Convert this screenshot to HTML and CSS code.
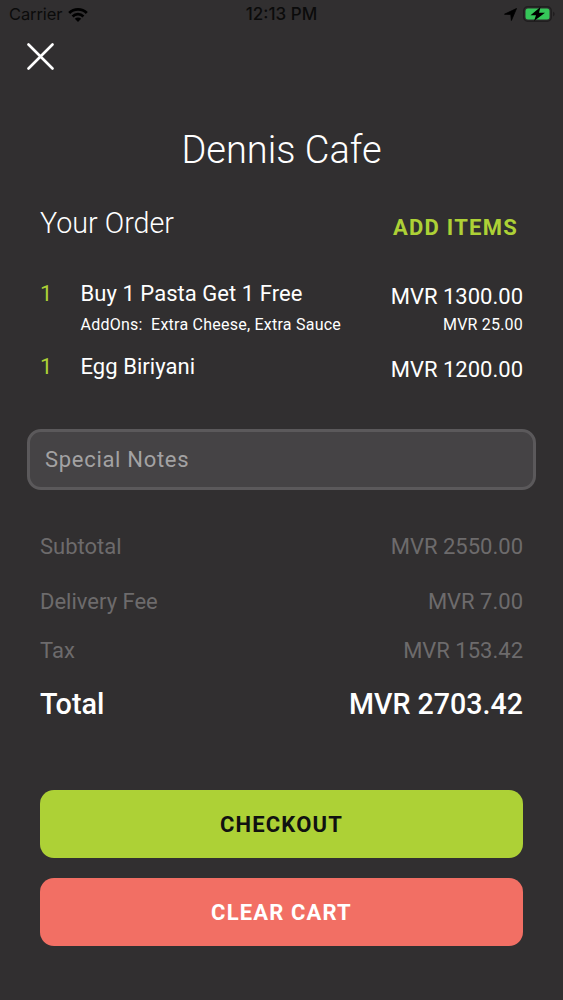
FILE: index.html
```html
<!DOCTYPE html>
<html lang="en">
<head>
<meta charset="utf-8">
<title>Dennis Cafe</title>
<link rel="stylesheet" href="styles.css">
</head>
<body>
<div class="screen">
  <header class="status">
    <div class="status-left"><span class="carrier">Carrier</span>
      <svg class="wifi" width="20" height="15" viewBox="0 0 20 15"><path d="M10 15 6.8 11.7a4.6 4.6 0 0 1 6.4 0zM3.6 8.500a9.1 9.1 0 0 1 12.8 0l-1.900 1.900a6.4 6.4 0 0 0-9 0zM.2 5a13.9 13.9 0 0 1 19.6 0l-2 2a11.1 11.1 0 0 0-15.6 0z"/></svg>
    </div>
    <span class="time">12:13 PM</span>
    <div class="status-right">
      <svg width="13" height="13" viewBox="0 0 13 13"><path d="M12.500.500 7.400 12.500 6.800 6.500.500 6.200z" stroke="#000" stroke-width=".8" stroke-linejoin="round"/></svg>
      <svg width="33" height="16" viewBox="0 0 33 16"><rect x=".75" y=".75" width="27.500" height="14.500" rx="4" fill="none" stroke="#201e1f" stroke-width="1.500"/><rect x="2.500" y="2.500" width="24" height="11" rx="2.500" fill="#35c759"/><path fill="#201e1f" d="M30 5.500q3.500 2.500 0 5z"/><path d="M17.500 1 7.500 9.200h5.500l-2 5.800 11-8.200h-6z"/></svg>
    </div>
  </header>
  <button class="close" aria-label="Close"><svg width="28" height="28" viewBox="0 0 28 28"><path d="M1.500 1.500 25.500 25.500M25.500 1.500 1.500 25.500"/></svg></button>
  <h1 class="title">Dennis Cafe</h1>
  <main class="content">
    <div class="row order-head"><h2>Your Order</h2><a class="add">ADD ITEMS</a></div>
    <div class="row item"><span class="qty">1</span><span class="name">Buy 1 Pasta Get 1 Free</span><span class="price">MVR 1300.00</span></div>
    <div class="row addon"><span class="extras">AddOns:&nbsp; Extra Cheese, Extra Sauce</span><span>MVR 25.00</span></div>
    <div class="row item second"><span class="qty">1</span><span class="name">Egg Biriyani</span><span class="price">MVR 1200.00</span></div>
    <div class="notes">Special Notes</div>
    <div class="row sum sub"><span>Subtotal</span><span>MVR 2550.00</span></div>
    <div class="row sum fee"><span>Delivery Fee</span><span>MVR 7.00</span></div>
    <div class="row sum tax"><span>Tax</span><span>MVR 153.42</span></div>
    <div class="row total"><span>Total</span><span class="amount">MVR 2703.42</span></div>
    <button class="btn checkout">CHECKOUT</button>
    <button class="btn clear">CLEAR CART</button>
  </main>
</div>
</body>
</html>
```
FILE: styles.css
```css
*{box-sizing:border-box}
body{margin:0;background:#312f30;font-family:Roboto,sans-serif;color:#fff}
.screen{width:563px;height:1000px;overflow:hidden;background:#312f30}
.status{height:28px;display:grid;grid-template-columns:1fr auto 1fr;align-items:center;padding:0 7px 0 9px;color:#0b0b0b;font:17px/28px Inter,sans-serif}
.status-left,.status-right{display:flex;align-items:center;gap:6px}
.carrier{font-size:16.500px;letter-spacing:-.1px}
.status-right{justify-content:flex-end}
.time{font-weight:500;margin-left:-2px}
.close{display:block;margin:15px 0 0 27px;padding:0;border:0;background:none;width:28px;height:28px}
.close svg{display:block;fill:none;stroke:#fff;stroke-width:2.600;stroke-linecap:round}
.title{margin:54px 0 0;height:50px;text-align:center;font-weight:300;font-size:38px;line-height:51px}
.content{padding:0 40px}
.row{display:flex;justify-content:space-between;white-space:nowrap}
.order-head{margin-top:28px;height:40px;line-height:40px}
.order-head h2{margin:0;font-weight:300;font-size:28.700px}
.add{color:#add136;font-size:22px;font-weight:700;letter-spacing:1.250px;padding:5px 5px 0 0}
.item{margin-top:36px;height:30px;font-size:22px;line-height:30px}
.qty{width:40.500px;color:#add136}
.name{flex:1;letter-spacing:.050px}
.price{padding-top:3px}
.addon{height:20px;margin-top:6px;padding-left:40.500px;font-size:16px;line-height:20px;letter-spacing:.200px}
.extras{letter-spacing:.240px}
.second{margin-top:17px}
.notes{margin:47px -13px 0;height:61px;border:3px solid #5b595b;border-radius:14px;background:#454345;padding-left:15px;color:#a3a2a3;font-size:22px;line-height:55px;letter-spacing:.700px}
.sum{height:30px;font-size:22px;line-height:31px;color:#6d6b6c}
.sub{margin-top:41px}
.fee{margin-top:25px}
.tax{margin-top:19px}
.total{margin-top:19px;height:40px;line-height:40px;font-size:28.800px;font-weight:500}
.amount{font-size:28.600px;line-height:41px}
.btn{display:block;width:100%;height:68px;border:0;border-radius:14px;font:700 22px/69px Roboto,sans-serif;letter-spacing:1.150px;padding:0;text-align:center}
.checkout{margin-top:66px;background:#add136;color:#111}
.clear{margin-top:20px;background:#f26f64;color:#fff}
```
